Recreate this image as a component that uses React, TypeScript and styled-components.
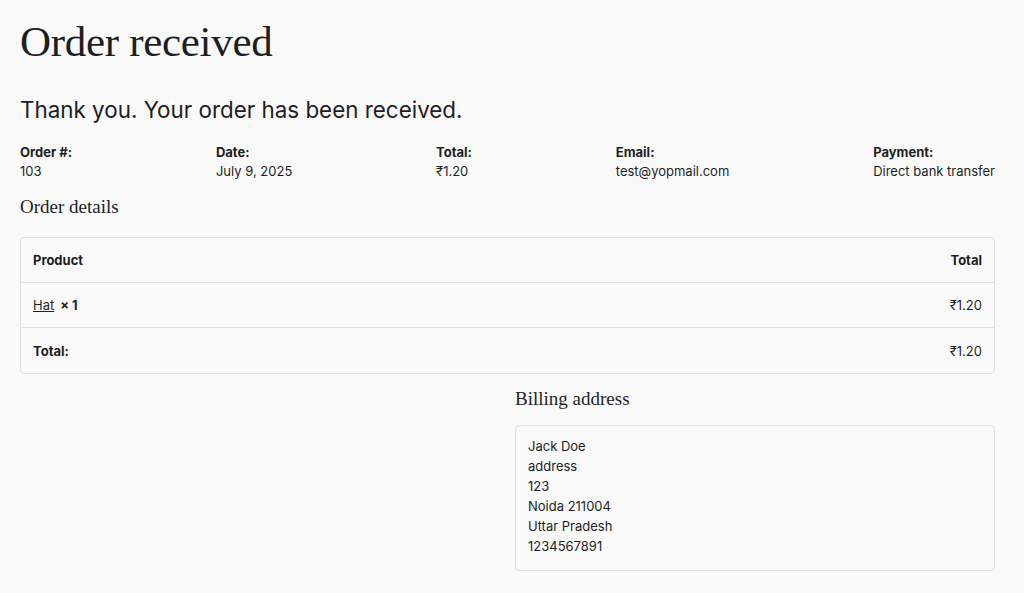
import { FC } from 'react';
import styled, { createGlobalStyle } from 'styled-components';

const GlobalStyle = createGlobalStyle`
  html, body {
    margin: 0;
    padding: 0;
    background: #f9f9f9;
    color: #1e1e1e;
    font-family: Inter, 'Liberation Sans', sans-serif;
  }
`;

const Page = styled.main`
  padding: 14px 29px 20px 20px;
  font-size: 13px;
`;

const Title = styled.h1`
  margin: 0;
  font-family: 'Liberation Serif', serif;
  font-weight: 400;
  font-size: 43px;
  line-height: 56px;
  letter-spacing: -0.3px;
`;

const Notice = styled.p`
  margin: 26px 0 19px;
  font-size: 22.4px;
  line-height: 28px;
  font-weight: 400;
`;

const Overview = styled.ul`
  display: flex;
  justify-content: space-between;
  list-style: none;
  margin: 0;
  padding: 0;

  li {
    line-height: 19px;
  }

  strong {
    display: block;
    font-weight: 700;
  }
`;

const SectionTitle = styled.h2`
  margin: 13px 0 17px;
  font-family: 'Liberation Serif', serif;
  font-weight: 400;
  font-size: 19px;
  line-height: 26px;
`;

const Table = styled.table`
  width: 100%;
  border: 1px solid #e0e0e0;
  border-radius: 4px;
  border-collapse: separate;
  border-spacing: 0;

  th,
  td {
    height: 44px;
    padding: 0 12px;
    text-align: left;
    font-weight: 400;
  }

  tfoot th,
  tfoot td {
    height: 45px;
  }

  thead th,
  tfoot th {
    font-weight: 700;
  }

  tbody td,
  tfoot th,
  tfoot td {
    border-top: 1px solid #e0e0e0;
  }

  .right {
    text-align: right;
  }

  a {
    color: inherit;
    text-decoration: underline;
  }
`;

const Qty = styled.strong`
  margin-left: 6px;
`;

const Addresses = styled.section`
  display: grid;
  grid-template-columns: 1fr 1fr;
  column-gap: 15px;
`;

const AddressCol = styled.div`
  grid-column: 2;

  h2 {
    margin-top: 12px;
    margin-bottom: 13px;
  }
`;

const AddressBox = styled.address`
  font-style: normal;
  border: 1px solid #e0e0e0;
  border-radius: 4px;
  padding: 10px 12px 14px;
  line-height: 20px;
`;

const App: FC = () => {
  const overview = [
    { label: 'Order #:', value: '103' },
    { label: 'Date:', value: 'July 9, 2025' },
    { label: 'Total:', value: '₹1.20' },
    { label: 'Email:', value: 'test@yopmail.com' },
    { label: 'Payment:', value: 'Direct bank transfer' },
  ];
  const address = ['Jack Doe', 'address', '123', 'Noida 211004', 'Uttar Pradesh', '1234567891'];

  return (
    <Page>
      <GlobalStyle />
      <Title>Order received</Title>
      <Notice>Thank you. Your order has been received.</Notice>
      <Overview>
        {overview.map((o) => (
          <li key={o.label}>
            <strong>{o.label}</strong>
            {o.value}
          </li>
        ))}
      </Overview>

      <SectionTitle>Order details</SectionTitle>
      <Table>
        <thead>
          <tr>
            <th>Product</th>
            <th className='right'>Total</th>
          </tr>
        </thead>
        <tbody>
          <tr>
            <td>
              <a href='#'>Hat</a>
              <Qty>× 1</Qty>
            </td>
            <td className='right'>₹1.20</td>
          </tr>
        </tbody>
        <tfoot>
          <tr>
            <th>Total:</th>
            <td className='right'>₹1.20</td>
          </tr>
        </tfoot>
      </Table>

      <Addresses>
        <AddressCol>
          <SectionTitle>Billing address</SectionTitle>
          <AddressBox>
            {address.map((line, i) => (
              <span key={i}>
                {line}
                <br />
              </span>
            ))}
          </AddressBox>
        </AddressCol>
      </Addresses>
    </Page>
  );
};

export default App;
